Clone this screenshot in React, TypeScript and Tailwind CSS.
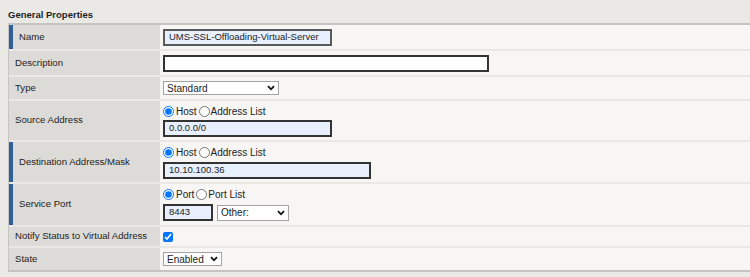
import type { ReactNode } from 'react';

const font = { fontFamily: '"Liberation Sans", Arial, sans-serif' };

function Row({
  label,
  required,
  height,
  last,
  children,
}: {
  label: string;
  required?: boolean;
  height: string;
  last?: boolean;
  children: ReactNode;
}) {
  return (
    <div className={`flex ${height} ${last ? '' : 'border-b-2 border-[#e9e8e4]'}`}>
      <div className="w-[151px] flex bg-[#dcdbd7] shrink-0">
        {required && <div className="w-[4px] bg-[#2f6196]" />}
        <div className="flex items-center pl-[6px] text-[9.6px] text-[#1e1e1e]">{label}</div>
      </div>
      <div className="flex-1 bg-[#f7f6f4] pl-[3px] flex flex-col justify-center">{children}</div>
    </div>
  );
}

function Chevron() {
  return (
    <svg width="8" height="6" viewBox="0 0 8 6" className="shrink-0">
      <polyline points="1,1.2 4,4.3 7,1.2" fill="none" stroke="#111" strokeWidth="1.8" />
    </svg>
  );
}

function Select({ value, width, height }: { value: string; width: string; height: string }) {
  return (
    <div
      className={`${width} ${height} bg-white border border-[#a3a3a3] flex items-center justify-between pl-[3px] pr-[3px] text-[10px] text-[#222]`}
    >
      <span>{value}</span>
      <Chevron />
    </div>
  );
}

function TextBox({ value, width, blue, light }: { value?: string; width: string; blue?: boolean; light?: boolean }) {
  return (
    <div
      className={`${width} h-[17px] border-2 ${light ? 'border-[#5a5a5a]' : 'border-[#333]'} ${
        blue ? 'bg-[#e8f0fe]' : 'bg-white'
      } flex items-center pl-[4px] text-[9.5px] text-[#222]`}
    >
      {value}
    </div>
  );
}

function Radios({ group, a, b }: { group: string; a: string; b: string }) {
  return (
    <div className="flex items-center h-[13px] text-[10px] text-[#222]">
      <input type="radio" defaultChecked name={group} className="w-[11px] h-[11px] m-0" />
      <span className="ml-[2px] mr-[2px]">{a}</span>
      <input type="radio" name={group} className="w-[11px] h-[11px] m-0" />
      <span className="ml-[1px]">{b}</span>
    </div>
  );
}

export default function App() {
  return (
    <div className="w-[750px] h-[277px] bg-[#eae9e5] overflow-hidden" style={font}>
      <div className="h-[23px] pl-[8px] pt-[9px] leading-[11px] text-[9.5px] font-bold text-[#1e1e1e]">
        General Properties
      </div>
      <div className="ml-[8px] border-l border-t-2 border-b-2 border-[#c6c4c0]">
        <Row label="Name" required height="h-[26px]">
          <TextBox value="UMS-SSL-Offloading-Virtual-Server" width="w-[169px]" blue light />
        </Row>
        <Row label="Description" height="h-[26px]">
          <TextBox width="w-[326px]" />
        </Row>
        <Row label="Type" height="h-[24px]">
          <Select value="Standard" width="w-[116px]" height="h-[14px]" />
        </Row>
        <Row label="Source Address" height="h-[41px]">
          <Radios group="src" a="Host" b="Address List" />
          <div className="mt-[2px]">
            <TextBox value="0.0.0.0/0" width="w-[169px]" blue />
          </div>
        </Row>
        <Row label="Destination Address/Mask" required height="h-[42px]">
          <Radios group="dst" a="Host" b="Address List" />
          <div className="mt-[3px]">
            <TextBox value="10.10.100.36" width="w-[208px]" blue />
          </div>
        </Row>
        <Row label="Service Port" required height="h-[43px]">
          <Radios group="port" a="Port" b="Port List" />
          <div className="mt-[3px] flex items-center gap-[4px]">
            <TextBox value="8443" width="w-[50px]" blue />
            <Select value="Other:" width="w-[72px]" height="h-[16px]" />
          </div>
        </Row>
        <Row label="Notify Status to Virtual Address" height="h-[21px]">
          <input type="checkbox" defaultChecked className="w-[10px] h-[10px] m-0" />
        </Row>
        <Row label="State" height="h-[22px]" last>
          <Select value="Enabled" width="w-[59px]" height="h-[14px]" />
        </Row>
      </div>
    </div>
  );
}
